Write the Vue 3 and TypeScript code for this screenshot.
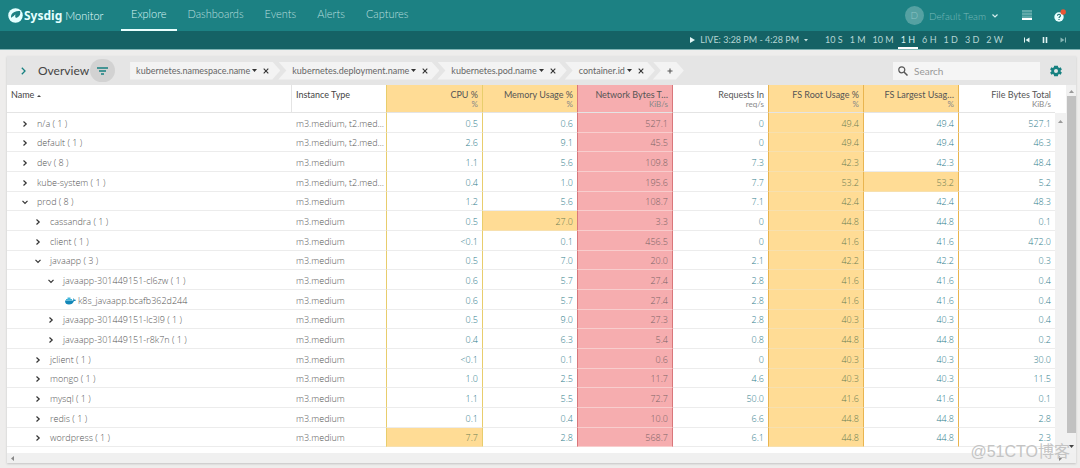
<script setup lang="ts">
import { ref } from 'vue'

type Tone = 'amber' | 'red' | ''
interface Column { title: string; unit: string; tone: Tone; fill: boolean; edge: string }
interface Row { name: string; level: number; state: 'closed' | 'open' | 'leaf'; type: string; values: string[]; hot?: number }

const tabs = ['Explore', 'Dashboards', 'Events', 'Alerts', 'Captures']
const ranges = ['10 S', '1 M', '10 M', '1 H', '6 H', '1 D', '3 D', '2 W']
const range = ref('1 H')
const search = ref('')
const groups = ['kubernetes.namespace.name', 'kubernetes.deployment.name', 'kubernetes.pod.name', 'container.id']

const columns: Column[] = [
  { title: 'CPU %', unit: '%', tone: 'amber', fill: false, edge: 'edge-yellow' },
  { title: 'Memory Usage %', unit: '%', tone: 'amber', fill: false, edge: 'edge-yellow' },
  { title: 'Network Bytes T…', unit: 'KiB/s', tone: 'red', fill: true, edge: 'edge-red' },
  { title: 'Requests In', unit: 'req/s', tone: '', fill: false, edge: '' },
  { title: 'FS Root Usage %', unit: '%', tone: 'amber', fill: true, edge: 'edge-amber' },
  { title: 'FS Largest Usag…', unit: '%', tone: 'amber', fill: false, edge: 'edge-amber' },
  { title: 'File Bytes Total', unit: 'KiB/s', tone: '', fill: false, edge: '' },
]

const mixed = 'm3.medium, t2.med…'
const m3 = 'm3.medium'
const rows: Row[] = [
  { name: 'n/a ( 1 )', level: 0, state: 'closed', type: mixed, values: ['0.5', '0.6', '527.1', '0', '49.4', '49.4', '527.1'] },
  { name: 'default ( 1 )', level: 0, state: 'closed', type: mixed, values: ['2.6', '9.1', '45.5', '0', '49.4', '49.4', '46.3'] },
  { name: 'dev ( 8 )', level: 0, state: 'closed', type: m3, values: ['1.1', '5.6', '109.8', '7.3', '42.3', '42.3', '48.4'] },
  { name: 'kube-system ( 1 )', level: 0, state: 'closed', type: mixed, values: ['0.4', '1.0', '195.6', '7.7', '53.2', '53.2', '5.2'], hot: 5 },
  { name: 'prod ( 8 )', level: 0, state: 'open', type: m3, values: ['1.2', '5.6', '108.7', '7.1', '42.4', '42.4', '48.3'] },
  { name: 'cassandra ( 1 )', level: 1, state: 'closed', type: m3, values: ['0.5', '27.0', '3.3', '0', '44.8', '44.8', '0.1'], hot: 1 },
  { name: 'client ( 1 )', level: 1, state: 'closed', type: m3, values: ['<0.1', '0.1', '456.5', '0', '41.6', '41.6', '472.0'] },
  { name: 'javaapp ( 3 )', level: 1, state: 'open', type: m3, values: ['0.5', '7.0', '20.0', '2.1', '42.2', '42.2', '0.3'] },
  { name: 'javaapp-301449151-cl6zw ( 1 )', level: 2, state: 'open', type: m3, values: ['0.6', '5.7', '27.4', '2.8', '41.6', '41.6', '0.4'] },
  { name: 'k8s_javaapp.bcafb362d244', level: 3, state: 'leaf', type: m3, values: ['0.6', '5.7', '27.4', '2.8', '41.6', '41.6', '0.4'] },
  { name: 'javaapp-301449151-lc3l9 ( 1 )', level: 2, state: 'closed', type: m3, values: ['0.5', '9.0', '27.3', '2.8', '40.3', '40.3', '0.4'] },
  { name: 'javaapp-301449151-r8k7n ( 1 )', level: 2, state: 'closed', type: m3, values: ['0.4', '6.3', '5.4', '0.8', '44.8', '44.8', '0.2'] },
  { name: 'jclient ( 1 )', level: 1, state: 'closed', type: m3, values: ['<0.1', '0.1', '0.6', '0', '40.3', '40.3', '30.0'] },
  { name: 'mongo ( 1 )', level: 1, state: 'closed', type: m3, values: ['1.0', '2.5', '11.7', '4.6', '40.3', '40.3', '11.5'] },
  { name: 'mysql ( 1 )', level: 1, state: 'closed', type: m3, values: ['1.1', '5.5', '72.7', '50.0', '41.6', '41.6', '0.1'] },
  { name: 'redis ( 1 )', level: 1, state: 'closed', type: m3, values: ['0.1', '0.4', '10.0', '6.6', '44.8', '44.8', '2.8'] },
  { name: 'wordpress ( 1 )', level: 1, state: 'closed', type: m3, values: ['7.7', '2.8', '568.7', '6.1', '44.8', '44.8', '2.3'], hot: 0 },
]

function cellClass(row: Row, i: number) {
  const c = columns[i]
  return [c.edge, c.fill ? c.tone : '', row.hot === i ? 'amber' : '']
}
</script>

<template>
  <div class="app">
    <header class="topbar">
      <a class="brand" href="#" aria-label="Sysdig Monitor">
        <svg class="logo" viewBox="0 0 30 30" aria-hidden="true">
          <circle cx="15" cy="15" r="14.500" fill="#e4ffff" />
          <path d="M24 6C17 5 10 8 7 13c-2 4-1 7 1 10l4-3c-1-4 0-6 3-7-1 3-1 5 1 7 5-1 8-5 8.500-9 .2-2 .2-3-.5-5z" fill="#1c8183" />
          <path d="M3 22l8-6 4 4-6 8z" fill="#e4ffff" />
        </svg>
        <strong>Sysdig</strong><span>Monitor</span>
      </a>
      <nav class="tabs">
        <a v-for="(t, i) in tabs" :key="t" href="#" :class="{ active: i === 0 }">{{ t }}</a>
      </nav>
      <div class="account">
        <button class="team" type="button">
          <span class="avatar">D</span>Default Team
          <svg class="down" viewBox="0 0 6 4"><path d="M.5.5 3 3 5.500.5" fill="none" stroke="#d5efee" stroke-width="1.200" /></svg>
        </button>
        <button class="plain" type="button" aria-label="Layout">
          <svg width="10" height="11" viewBox="0 0 10 11"><path d="M0 0h10v8H0z" fill="#5fa9a9" /><path d="M0 2.500h10M0 5.500h10" stroke="#3f9697" /><path d="M0 8h10v2H0z" fill="#fff" /></svg>
        </button>
        <button class="plain help" type="button" aria-label="Help">
          <svg width="12" height="13" viewBox="0 0 12 13"><circle cx="5" cy="8" r="4.700" fill="#e8ffff" /><path d="M3.500 6.800c0-2 3-2 3 0 0 1-1.500 1-1.500 2.200M5 10v1" fill="none" stroke="#1c6e70" stroke-width="1.100" /><circle cx="9.200" cy="3" r="2.700" fill="#ea5535" /></svg>
        </button>
      </div>
    </header>

    <div class="timebar">
      <button class="live" type="button">
        <svg width="5" height="6" viewBox="0 0 5 6"><path d="M0 0l5 3-5 3z" fill="#e2f5f4" /></svg>
        <span>LIVE: 3:28 PM - 4:28 PM</span>
        <svg width="4" height="3" viewBox="0 0 4 3"><path d="M0 0h4L2 2.500z" fill="#c6e0df" /></svg>
      </button>
      <div class="ranges">
        <button v-for="r in ranges" :key="r" type="button" :class="{ active: r === range }" @click="range = r">{{ r }}</button>
      </div>
      <div class="player">
        <button type="button" aria-label="Back"><svg viewBox="0 0 6 6"><path d="M.5.5v5" stroke="#e2f5f4" /><path d="M5.500.5v5L1.500 3z" fill="#e2f5f4" /></svg></button>
        <button type="button" aria-label="Pause"><svg viewBox="0 0 6 6"><path d="M1.500 0v6M4.500 0v6" stroke="#e2f5f4" stroke-width="1.600" /></svg></button>
        <button type="button" aria-label="Forward"><svg viewBox="0 0 6 6"><path d="M5.500.5v5" stroke="#85b5b5" /><path d="M.5.5v5l4-2.500z" fill="#85b5b5" /></svg></button>
      </div>
    </div>

    <main class="panel">
      <div class="toolbar">
        <button class="plain expand" type="button" aria-label="Expand"><svg width="5" height="8" viewBox="0 0 5 8"><path d="M.8.8 4 4 .8 7.200" fill="none" stroke="#168080" stroke-width="1.300" /></svg></button>
        <h1>Overview</h1>
        <button class="filter" type="button" aria-label="Filter"><svg width="11" height="8" viewBox="0 0 11 8"><path d="M0 1h11M2 4h7M4 7h3" stroke="#168080" stroke-width="1.300" /></svg></button>
        <div class="crumbs">
          <div v-for="g in groups" :key="g" class="crumb">
            <button class="plain pick" type="button">{{ g }}<svg width="5" height="3" viewBox="0 0 5 3"><path d="M0 0h5L2.500 3z" fill="#333" /></svg></button>
            <button class="plain" type="button" :aria-label="'Remove ' + g"><svg width="6" height="6" viewBox="0 0 6 6"><path d="M.7.7l4.600 4.600M5.300.7.7 5.300" stroke="#333" stroke-width="1.100" /></svg></button>
          </div>
          <div class="crumb add">
            <button class="plain" type="button" aria-label="Add grouping"><svg width="6" height="6" viewBox="0 0 6 6"><path d="M3 .5v5M.5 3h5" stroke="#555" stroke-width="1.100" /></svg></button>
          </div>
        </div>
        <label class="search">
          <svg width="10" height="10" viewBox="0 0 10 10"><circle cx="3.800" cy="3.800" r="3" fill="none" stroke="#555" stroke-width="1.200" /><path d="M6 6l3.500 3.500" stroke="#555" stroke-width="1.500" /></svg>
          <input v-model="search" type="text" placeholder="Search" aria-label="Search" />
        </label>
        <button class="plain gear" type="button" aria-label="Settings">
          <svg width="12" height="12" viewBox="0 0 24 24"><path fill="#168080" d="M21.200 13.200a9 9 0 0 0 0-2.400l2.500-2-2.400-4.200-3 1.200a9 9 0 0 0-2-1.200L15.800 1.500H8.200L7.700 4.600a9 9 0 0 0-2 1.200l-3-1.200L.3 8.800l2.500 2a9 9 0 0 0 0 2.400l-2.500 2 2.400 4.200 3-1.200a9 9 0 0 0 2 1.200l.5 3.100h7.600l.5-3.100a9 9 0 0 0 2-1.200l3 1.200 2.400-4.200zM12 16a4 4 0 1 1 0-8 4 4 0 0 1 0 8z" /></svg>
        </button>
      </div>

      <div class="grid">
        <div class="body">
          <table>
            <colgroup>
              <col class="c-name" /><col class="c-std" /><col class="c-wide" /><col class="c-std" /><col class="c-wide" />
              <col class="c-std" /><col class="c-std" /><col class="c-std" /><col class="c-last" />
            </colgroup>
            <thead>
              <tr>
                <th class="left">Name <svg width="4" height="2" viewBox="0 0 4 2"><path d="M0 2h4L2 0z" fill="#444" /></svg></th>
                <th class="left sep">Instance Type</th>
                <th v-for="c in columns" :key="c.title" :class="[c.tone, c.edge]">
                  <div class="title">{{ c.title }}</div>
                  <div class="unit">{{ c.unit }}</div>
                </th>
              </tr>
            </thead>
            <tbody>
              <tr v-for="row in rows" :key="row.name">
                <td class="name">
                  <div class="node" :class="'level-' + row.level">
                    <svg v-if="row.state === 'leaf'" class="whale" width="11" height="8" viewBox="0 0 22 16"><path d="M0 7h16c1-1 1-2 0-4 2 0 3 1 3 3 1-1 2 0 3 0-1 2-2 2-4 2-2 5-5 7-10 7C3 15 0 13 0 7z" fill="#1387b8" /><path d="M2 4h12v3H2zM5 1h6v3H5z" fill="#43b5d9" /></svg>
                    <button v-else class="plain twist" type="button" :aria-label="'Toggle ' + row.name">
                      <svg v-if="row.state === 'closed'" width="6" height="6" viewBox="0 0 6 6"><path d="M1.500.5 4.200 3 1.500 5.500" fill="none" stroke="#333" stroke-width="1.200" /></svg>
                      <svg v-else width="6" height="6" viewBox="0 0 6 6"><path d="M.5 1.800 3 4.300 5.500 1.800" fill="none" stroke="#333" stroke-width="1.200" /></svg>
                    </button>
                    <span>{{ row.name }}</span>
                  </div>
                </td>
                <td class="type">{{ row.type }}</td>
                <td v-for="(v, i) in row.values" :key="i" class="num" :class="cellClass(row, i)">{{ v }}</td>
              </tr>
            </tbody>
          </table>
        </div>
        <div class="inner-scroll"><svg width="5" height="3" viewBox="0 0 5 3"><path d="M0 3h5L2.500 0z" fill="#999" /></svg></div>
        <div class="outer-scroll">
          <svg width="5" height="3" viewBox="0 0 5 3"><path d="M0 3h5L2.500 0z" fill="#999" /></svg>
          <div class="thumb"></div>
          <svg width="5" height="3" viewBox="0 0 5 3"><path d="M0 0h5L2.500 3z" fill="#444" /></svg>
        </div>
      </div>
      <div class="h-scroll">
        <svg width="3" height="5" viewBox="0 0 3 5"><path d="M3 0v5L0 2.500z" fill="#888" /></svg>
        <svg width="3" height="5" viewBox="0 0 3 5"><path d="M0 0v5l3-2.500z" fill="#888" /></svg>
      </div>
    </main>
    <div class="watermark">@51CTO博客</div>
  </div>
</template>

<style>
body { background: #eeedec; }
</style>

<style scoped>
.app {
  position: relative;
  font: 9px/12px Lato, "Noto Sans CJK SC", sans-serif;
  color: #555;
  padding-bottom: 5px;
}
*, *::before { box-sizing: border-box; }
button { font: inherit; color: inherit; background: none; border: 0; padding: 0; cursor: pointer; }
a { color: inherit; text-decoration: none; }
svg { flex: none; }
.plain { display: flex; align-items: center; }

.topbar { display: flex; height: 31px; background: #1c8183; color: #b9dfde; font-size: 11px; line-height: 14px; }
.brand { display: flex; align-items: center; width: 113px; padding-left: 8px; color: #e4ffff; }
.logo { width: 15px; height: 15px; margin-right: 1px; }
.brand strong { font: 700 12px/16px "Noto Sans", sans-serif; margin-right: 3px; }
.brand span { font-weight: 300; font-size: 11px; }
.tabs { display: flex; gap: 1px; margin-left: 8px; font-weight: 300; }
.tabs a { padding: 7px 10px 8px; border-bottom: 2px solid transparent; }
.tabs .active { border-color: #e9fffe; color: #d8f4f3; }
.account { display: flex; align-items: center; margin-left: auto; padding-right: 14px; }
.team { display: flex; align-items: center; color: #79b9b8; font-weight: 300; font-size: 10px; }
.avatar { width: 19px; height: 19px; line-height: 19px; margin-right: 5px; border-radius: 50%; background: #55a1a2; color: #8cc3c3; }
.down { width: 6px; height: 4px; margin-left: 6px; }
.account .plain { margin-left: 24px; }
.account .help { margin-left: 22px; }

.timebar { display: flex; justify-content: flex-end; height: 19px; background: #156265; border-bottom: 1px solid #7fb4b4; color: #b4d5d4; font-weight: 400; padding-right: 14px; }
.live { display: flex; align-items: center; gap: 5px; margin-right: 14px; }
.ranges { display: flex; gap: 1px; }
.ranges button { padding: 2px 3px 0; border-bottom: 2px solid transparent; }
.ranges .active { border-color: #fff; color: #d9f2f1; }
.player { display: flex; gap: 12px; margin-left: 18px; }
.player svg { display: block; width: 6px; height: 6px; }

.panel { margin: 6px 4px 0 7px; background: #fff; box-shadow: 0 1px 2px #c4c4c4; }
.toolbar { display: flex; align-items: center; height: 29px; padding: 0 14px; background: #e5e5e5; }
.toolbar h1 { margin: 0 1px 0 12px; font-size: 12px; font-weight: 400; color: #444; }
.filter { display: flex; align-items: center; justify-content: center; width: 25px; height: 23px; border-radius: 12px; background: #d2d2d2; margin-right: 15px; }
.crumbs { display: flex; color: #666; }
.crumb { display: flex; align-items: center; gap: 6px; height: 18px; margin-left: -2px; padding: 0 11px 0 14px; background: #f3f3f3; clip-path: polygon(0 0, calc(100% - 8px) 0, 100% 50%, calc(100% - 8px) 100%, 0 100%, 8px 50%); }
.crumb:first-child { padding-left: 6px; margin-left: 0; clip-path: polygon(0 0, calc(100% - 8px) 0, 100% 50%, calc(100% - 8px) 100%, 0 100%); }
.pick { gap: 2px; }
.search { display: flex; align-items: center; gap: 6px; width: 147px; height: 18px; margin-left: auto; padding: 0 5px; background: #f5f5f5; }
.search input { flex: 1; min-width: 0; border: 0; padding: 0; background: none; outline: 0; font: inherit; font-size: 10px; color: #555; }
.search input::placeholder { color: #999; }
.gear { margin: 0 0 0 10px; }

.grid { display: flex; }
.body { flex: 1; min-width: 0; padding-bottom: 6px; }
table { width: 100%; table-layout: fixed; border-collapse: separate; border-spacing: 0; }
.c-std { width: 95px; }
.c-wide { width: 96px; }
.c-last { width: 97px; }
th { height: 28px; padding: 4px 4px 0; vertical-align: top; text-align: right; font-weight: 400; color: #555; border-bottom: 1px solid #e4e4e4; white-space: nowrap; }
th.left { text-align: left; color: #444; }
th svg { vertical-align: middle; }
.sep { border-left: 1px solid #e4e4e4; }
.unit { font-size: 8px; line-height: 7px; color: #888; }
td { height: 20px; padding: 2px 4px 0; font: 300 9px/16px "Open Sans", sans-serif; border-bottom: 1px solid #ececec; white-space: nowrap; color: #555; }
tr:nth-child(3n + 2) td { height: 19px; }
td.type { padding-left: 5px; }
.num { text-align: right; color: #2f7d8c; }
.edge-yellow { border-left: 1px solid #e8cd6c; }
.edge-amber { border-left: 1px solid #e9b550; }
.edge-amber + td, .edge-amber + th { border-left: 1px solid #e9b550; }
.edge-red { border-left: 1px solid #d9777b; border-right: 1px solid #d9777b; }
th.amber, td.amber { background: #ffdc95; }
th.red, td.red { background: #f6adaf; }
td.amber { color: #6b7c52; border-bottom-color: #f7e0ae; }
td.red { color: #7a6466; border-bottom-color: #f8cdcd; }
.node { display: flex; align-items: center; }
.twist { width: 6px; margin-right: 9px; }
.whale { margin-right: 2px; }
.level-0 { padding-left: 11px; }
.level-1 { padding-left: 24px; }
.level-2 { padding-left: 37px; }
.level-3 { padding-left: 54px; }
.inner-scroll { width: 11px; margin-top: 28px; padding-top: 5px; background: #f1f1f1; line-height: 3px; text-align: center; }
.outer-scroll { display: flex; flex-direction: column; align-items: center; justify-content: space-between; width: 10px; padding: 5px 0; background: #f1f1f1; }
.thumb { flex: 1; width: 9px; margin: 3px 0 12px; background: #c1c1c1; }
.h-scroll { display: flex; align-items: center; justify-content: space-between; height: 10px; padding: 0 14px 0 4px; background: #f0f0f0; }
.watermark { position: absolute; right: 10px; bottom: 6px; font: 16px/20px "Liberation Sans", "Noto Sans CJK SC", sans-serif; color: #c4c4c4; pointer-events: none; }
</style>
